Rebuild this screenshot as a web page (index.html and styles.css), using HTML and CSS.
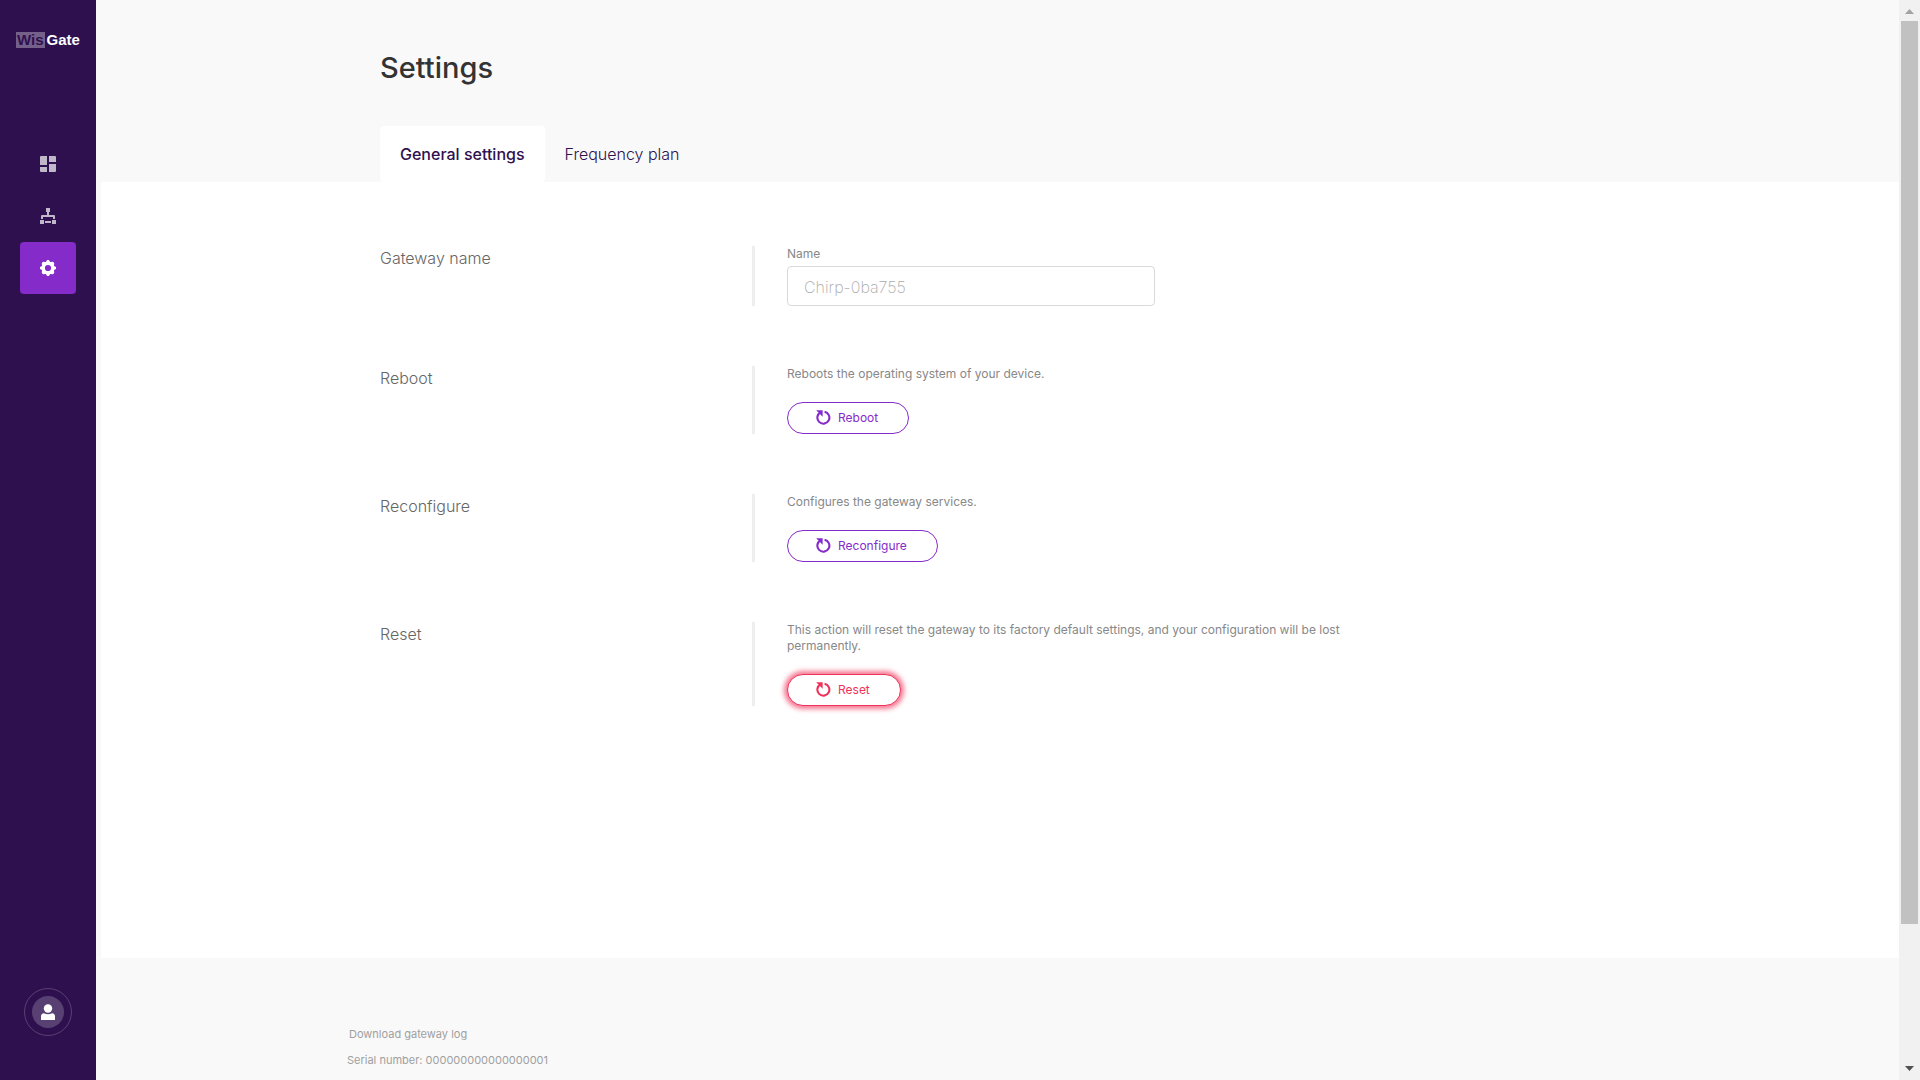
FILE: index.html
```html
<!DOCTYPE html>
<html lang="en">
<head>
<meta charset="utf-8">
<title>WisGate - Settings</title>
<link rel="stylesheet" href="styles.css">
</head>
<body>
<svg class="sprite" aria-hidden="true">
  <symbol id="icon-restart" viewBox="1 0 16 16">
    <path d="M5.600 3.360A6 6 0 1 0 9.550 2.810" fill="none" stroke="currentColor" stroke-width="2.100"/>
    <path d="M1.200 1.300H7.600V7.700Z" fill="currentColor"/>
  </symbol>
</svg>
<div class="app">
  <aside class="sidebar">
    <a class="logo" href="#"><span class="logo-wis">Wis</span><span class="logo-gate">Gate</span></a>
    <nav class="nav">
      <a class="nav-item" href="#" aria-label="Dashboard">
        <svg class="icon" viewBox="0 0 16 16" fill="currentColor"><path d="M1 0H7V9H0V1A1 1 0 0 1 1 0ZM9 0H15A1 1 0 0 1 16 1V6H9ZM0 11H7V16H1A1 1 0 0 1 0 15ZM9 8H16V15A1 1 0 0 1 15 16H9Z"/></svg>
      </a>
      <a class="nav-item" href="#" aria-label="Network">
        <svg class="icon" viewBox="0 0 16 16" fill="currentColor"><path d="M6 0H10V4H9V7H14A1 1 0 0 1 15 8V11H13V9H3V11H1V8A1 1 0 0 1 2 7H7V4H6ZM0 12H4V16H0ZM5 13H11V15H5ZM12 12H16V16H12Z"/></svg>
      </a>
      <a class="nav-item nav-item-active" href="#" aria-label="Settings">
        <svg class="icon" viewBox="0 0 16 16" fill="currentColor" fill-rule="evenodd"><path d="M7 0H9L10 2 13 1.800 14.200 3 14 6 16 7V9L14 10 14.200 13 13 14.200 10 14 9 16H7L6 14 3 14.200 1.800 13 2 10 0 9V7L2 6 1.800 3 3 1.800 6 2ZM8 4.900A3.100 3.100 0 1 0 8 11.100A3.100 3.100 0 1 0 8 4.900Z"/></svg>
      </a>
    </nav>
    <button class="account" type="button" aria-label="Account">
      <span class="avatar">
        <svg class="icon" viewBox="0 0 16 16" fill="currentColor"><circle cx="8" cy="4.500" r="4.200"/><path d="M1 16V12.500Q1 9.500 4 9.200Q8 11.400 12 9.200Q15 9.500 15 12.500V16Z"/></svg>
      </span>
    </button>
  </aside>

  <div class="page">
    <header class="header">
      <div class="container">
        <h1 class="title">Settings</h1>
        <nav class="tabs">
          <a class="tab tab-active" href="#">General settings</a>
          <a class="tab" href="#">Frequency plan</a>
        </nav>
      </div>
    </header>

    <main class="content">
      <div class="container sections">
        <section class="section">
          <h2 class="section-title">Gateway name</h2>
          <div class="section-body">
            <label class="label" for="name">Name</label>
            <input class="input" id="name" type="text" placeholder="Chirp-0ba755">
          </div>
        </section>
        <section class="section">
          <h2 class="section-title">Reboot</h2>
          <div class="section-body">
            <p class="description">Reboots the operating system of your device.</p>
            <button class="button" type="button"><svg class="icon"><use href="#icon-restart"/></svg>Reboot</button>
          </div>
        </section>
        <section class="section">
          <h2 class="section-title">Reconfigure</h2>
          <div class="section-body">
            <p class="description">Configures the gateway services.</p>
            <button class="button" type="button"><svg class="icon"><use href="#icon-restart"/></svg>Reconfigure</button>
          </div>
        </section>
        <section class="section">
          <h2 class="section-title">Reset</h2>
          <div class="section-body">
            <p class="description">This action will reset the gateway to its factory default settings, and your configuration will be lost permanently.</p>
            <button class="button button-danger" type="button"><svg class="icon"><use href="#icon-restart"/></svg>Reset</button>
          </div>
        </section>
      </div>
    </main>

    <footer class="footer">
      <div class="footer-inner">
        <a class="footer-link" href="#">Download gateway log</a>
        <p class="footer-text">Serial number: 000000000000000001</p>
      </div>
    </footer>
  </div>

  <div class="scrollbar" aria-hidden="true">
    <svg class="scroll-arrow" viewBox="0 0 21 21"><path d="M6 14 10.500 9 15 14Z" fill="#a3a3a3"/></svg>
    <div class="scroll-track"><div class="scroll-thumb"></div></div>
    <svg class="scroll-arrow" viewBox="0 0 21 21"><path d="M6 7 10.500 12 15 7Z" fill="#505050"/></svg>
  </div>
</div>
</body>
</html>
```
FILE: styles.css
```css
* {
  box-sizing: border-box;
}

body {
  margin: 0;
  background: #f9f9f9;
  color: #333;
  font-family: Inter, "Liberation Sans", sans-serif;
  font-size: 16px;
}

h1, h2, p {
  margin: 0;
}

a {
  color: inherit;
  text-decoration: none;
}

.sprite {
  display: none;
}

.icon {
  display: block;
  width: 16px;
  height: 16px;
}

.app {
  display: flex;
  height: 100vh;
}

/* Sidebar */
.sidebar {
  display: flex;
  flex: none;
  flex-direction: column;
  align-items: center;
  width: 96px;
  padding: 32px 0 44px;
  background: #2f104f;
}

.logo {
  display: flex;
  gap: 2px;
  font: bold 15px/16px "Liberation Sans", sans-serif;
}

.logo-wis {
  padding: 0 1px;
  background: #75608a;
  color: #2f104f;
}

.logo-gate {
  color: #fff;
}

.nav {
  display: flex;
  flex-direction: column;
  margin: 90px 0 auto;
}

.nav-item {
  display: grid;
  place-items: center;
  width: 56px;
  height: 52px;
  border-radius: 4px;
  color: #c1b7ca;
}

.nav-item-active {
  background: #852bc9;
  color: #fff;
}

.account {
  display: grid;
  place-items: center;
  width: 48px;
  height: 48px;
  padding: 0;
  border: 1px solid #594073;
  border-radius: 50%;
  background: none;
  color: #fff;
}

.avatar {
  display: grid;
  place-items: center;
  width: 32px;
  height: 32px;
  border-radius: 50%;
  background: #594073;
}

/* Page */
.page {
  display: flex;
  flex: 1;
  flex-direction: column;
  min-width: 0;
  padding-left: 5px;
  overflow: hidden;
}

.container {
  width: 100%;
  max-width: 1240px;
  margin: 0 auto;
}

.header {
  padding-top: 48px;
}

.title {
  font-size: 29px;
  font-weight: 500;
  line-height: 40px;
}

.tabs {
  display: flex;
  margin-top: 38px;
}

.tab {
  padding: 0 20px;
  border-radius: 4px;
  color: #2f104f;
  font-weight: 300;
  line-height: 56px;
}

.tab-active {
  background: #fff;
  font-weight: 500;
}

.content {
  flex: 1;
  padding: 64px 0;
  background: #fff;
}

.sections {
  display: flex;
  flex-direction: column;
  gap: 60px;
}

.section {
  display: grid;
  grid-template-columns: 372px 1fr;
}

.section-title {
  color: #666;
  font-size: 16px;
  font-weight: 300;
  line-height: 24px;
}

.section-body {
  padding-left: 32px;
  border-left: 3px solid #eee;
}

.description {
  max-width: 580px;
  margin-bottom: 20px;
}

.label,
.description {
  display: block;
  color: #888;
  font-size: 12px;
  line-height: 16px;
}

.label {
  margin-bottom: 4px;
}

.input {
  display: block;
  width: 368px;
  height: 40px;
  padding: 2px 16px 0;
  border: 1px solid #d9d9d9;
  border-radius: 4px;
  background: #fff;
  color: #333;
  font: inherit;
}

.input::placeholder {
  color: #aaa;
  font-weight: 200;
}

.button {
  display: flex;
  align-items: center;
  gap: 6px;
  height: 32px;
  padding: 0 30px 2px 28px;
  border: 1px solid #852bc9;
  border-radius: 16px;
  background: #fff;
  color: #852bc9;
  font: inherit;
  font-size: 12px;
}

.button-danger {
  border-color: #f0325a;
  box-shadow: 0 0 5px 3px #f0325aaa;
  color: #f0325a;
}

/* Footer */
.footer {
  height: 122px;
  padding-top: 68px;
  color: #a0a0a0;
  font-size: 11px;
  line-height: 16px;
}

.footer-inner {
  width: 100%;
  max-width: 1306px;
  margin: 0 auto;
}

.footer-link {
  display: block;
  margin-bottom: 10px;
  padding-left: 2px;
}

/* Scrollbar */
.scrollbar {
  display: flex;
  flex: none;
  flex-direction: column;
  width: 21px;
  background: #f1f1f1;
}

.scroll-arrow {
  display: block;
  width: 21px;
  height: 21px;
}

.scroll-track {
  flex: 1;
  padding: 0 2px;
}

.scroll-thumb {
  height: 87%;
  background: #c1c1c1;
}
```
